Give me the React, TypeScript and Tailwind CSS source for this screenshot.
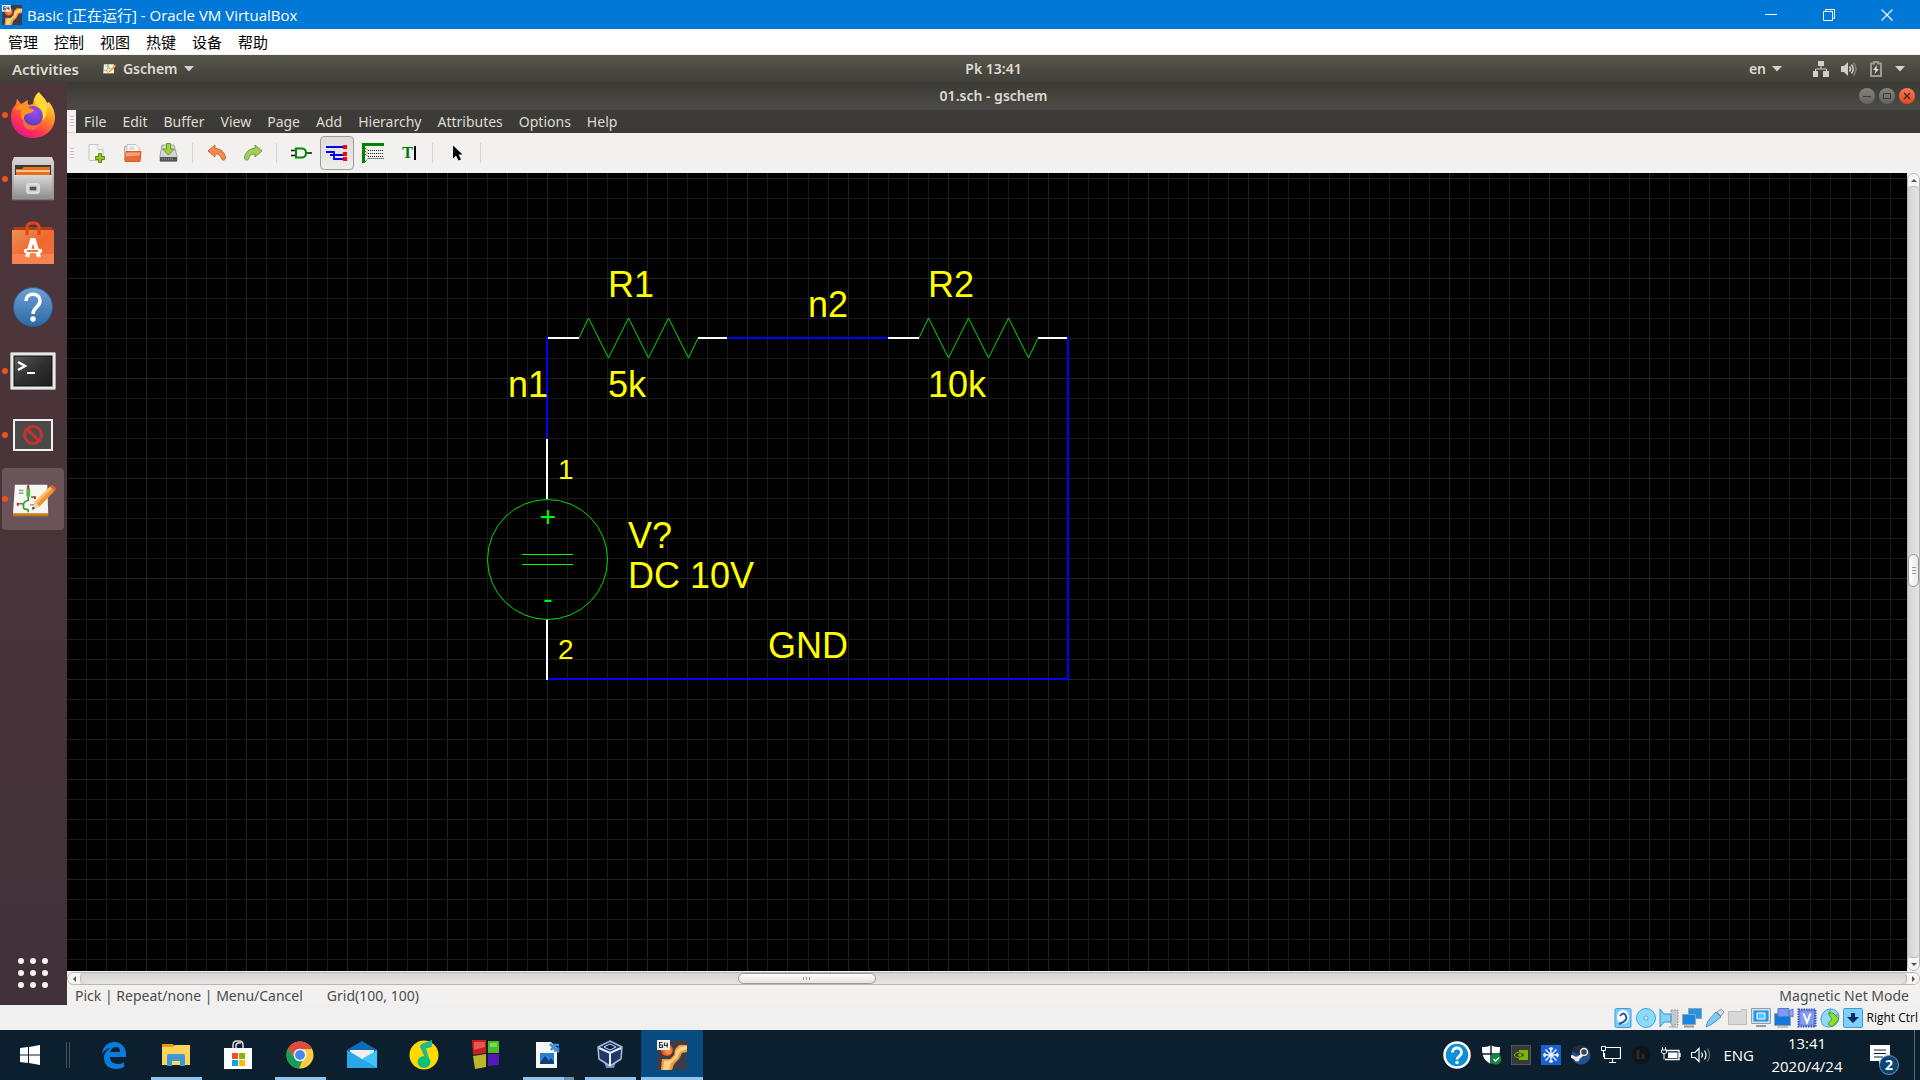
import React from "react";
import type { ReactNode } from "react";

const UBUNTU = "font-['Noto_Sans',sans-serif]";
const SEGOE = "font-['Open_Sans','Noto_Sans_CJK_SC',sans-serif]";

function Svg({ w, h = w, box, children }: { w: number; h?: number; box?: string; children: ReactNode }) {
  return (
    <svg width={w} height={h} viewBox={box ?? `0 0 ${w} ${h}`} fill="none" className="shrink-0" aria-hidden="true">
      {children}
    </svg>
  );
}

/* ---------- VirtualBox host window ---------- */

function MachineIcon({ size }: { size: number }) {
  return (
    <Svg w={size} box="0 0 30 30">
      <rect width="30" height="30" fill="#3b3d4b" />
      <circle cx="10" cy="10" r="6" fill="#f4581a" />
      <circle cx="11" cy="11" r="3.500" fill="#ff8a3a" />
      <path d="M30 5H22L18 9 17 15 13 19H5L4 30h11l2-6 5-5 3-6 5-1Z" fill="#f39a35" />
      <path d="M30 6 23 7 19 11 18 16 14 20 7 21 6 30h6l2-7 6-5 3-6 7-3Z" fill="#ffd28a" />
      <rect x="0" y="0" width="13" height="10" fill="#f4f4f4" />
      <path d="M5.500 2.500h-3v5h3v-2.500h-3M7.500 2.500v3h3.500M10.200 2.500v5" stroke="#333" strokeWidth="1.200" />
    </Svg>
  );
}

function HostTitleBar() {
  return (
    <header className={`flex h-[29px] shrink-0 items-center bg-[#0078d7] text-white ${SEGOE}`}>
      <div className="flex flex-1 items-center gap-[5px] pl-[2px]">
        <MachineIcon size={20} />
        <h1 className="text-[15px] leading-5">Basic [正在运行] - Oracle VM VirtualBox</h1>
      </div>
      <button aria-label="Minimize" className="flex h-full w-[58px] items-center justify-center">
        <Svg w={12}><path d="M0 5.500h12" stroke="#fff" /></Svg>
      </button>
      <button aria-label="Restore" className="flex h-full w-[58px] items-center justify-center">
        <Svg w={12}><path d="M.5 2.500h9v9h-9zM2.500 2.500v-2h9v9h-2" stroke="#fff" /></Svg>
      </button>
      <button aria-label="Close" className="mr-1 flex h-full w-[58px] items-center justify-center">
        <Svg w={12}><path d="M.5.500l11 11M11.500.500l-11 11" stroke="#fff" strokeWidth="1.200" /></Svg>
      </button>
    </header>
  );
}

function HostMenu() {
  return (
    <nav className={`flex h-[26px] shrink-0 border-b border-[#f0f0f0] bg-white text-[15px] leading-[26px] text-black ${SEGOE}`}>
      {["管理", "控制", "视图", "热键", "设备", "帮助"].map((m) => (
        <button key={m} className="px-2">{m}</button>
      ))}
    </nav>
  );
}

/* ---------- Ubuntu top panel ---------- */

function Caret() {
  return <Svg w={10} h={6}><path d="M0 0h10L5 5.500Z" fill="#d5d3cd" /></Svg>;
}

function GschemGlyph() {
  return (
    <>
      <path d="M5 5h34l1 31H3Z" fill="#f6f6f2" />
      <path d="M3 35h37v3H3Z" fill="#c8791b" />
      <path d="M9 11h5M9 14h5M21 26h7" stroke="#999" strokeWidth="1.500" />
      <path d="M19 5v4M19 17v5M22 18h4M19 21q-5 2-5 5v3q0 2 5 2M9 25h5M19 31v3" stroke="#3d9a30" strokeWidth="1.800" />
      <rect x="17" y="8" width="4" height="10" rx="2" fill="#59b64a" />
      <path d="M18 6h2v3h-2zM7 24h2v3H7zM25 17h2v3h-2z" fill="#d12" />
      <path d="M23 31l3-8L42 7l5 4-16 17Z" fill="#f2932c" />
      <path d="M26 23 42 7l2 2-16 16Z" fill="#ffc068" />
      <path d="m42 7 2-2 5 4-2 2Z" fill="#e9572e" />
      <path d="m23 31 3-8 5 5Z" fill="#f0d8a8" />
      <path d="m23 31 1-3 2 2Z" fill="#222" />
    </>
  );
}

function TopPanel() {
  return (
    <div className={`grid h-[27px] shrink-0 grid-cols-[1fr_auto_1fr] items-center bg-linear-to-b from-[#58554b] to-[#403f39] text-[14px] leading-5 font-semibold text-[#dfdbd2] ${UBUNTU}`}>
      <div className="flex items-center pl-3">
        <button className="text-[15px]">Activities</button>
        <button className="ml-6 flex items-center gap-[6px]">
          <Svg w={14} box="2 1 48 40"><GschemGlyph /></Svg>
          Gschem
          <Caret />
        </button>
      </div>
      <button className="ml-[67px]">Pk 13:41</button>
      <div className="flex items-center justify-end pr-[15px]">
        <button className="mr-[31px] flex items-center gap-[6px]">en <Caret /></button>
        <button aria-label="System menu" className="flex items-center gap-3">
          <Svg w={16}>
            <path d="M5 0h6v5H5zM0 10h5v6H0zM10 10h6v6h-6z" fill="#d0cec9" />
            <path d="M8 5v3M2.500 10V8h11v2" stroke="#d0cec9" />
          </Svg>
          <Svg w={16}>
            <path d="M0 5h3l4-4v14l-4-4H0Z" fill="#d0cec9" />
            <path d="M8.500 5.500q2 2.500 0 5M10.500 3.500q3.500 4.500 0 9" stroke="#d0cec9" strokeWidth="1.600" />
            <path d="M12.500 1.500q5 6.500 0 13" stroke="#807e78" strokeWidth="1.600" />
          </Svg>
          <Svg w={14} h={16}>
            <path d="M3 2.500h2V1h4v1.500h3v12.500H2v-12.500Z" stroke="#9c9a95" strokeWidth="2" />
            <path d="M8 4 4 9h2.500L5.500 13 10 8H7.500Z" fill="#dddbd6" />
          </Svg>
          <Caret />
        </button>
      </div>
    </div>
  );
}

/* ---------- Dock ---------- */

function Firefox() {
  return (
    <Svg w={46} box="0 0 46 46">
      <defs>
        <linearGradient id="fx" x1="38" y1="4" x2="12" y2="44" gradientUnits="userSpaceOnUse">
          <stop offset="0" stopColor="#fff14a" /><stop offset=".35" stopColor="#ff9a1f" />
          <stop offset=".7" stopColor="#ff3f47" /><stop offset="1" stopColor="#e31587" />
        </linearGradient>
        <radialGradient id="fxg" cx=".6" cy=".3" r=".8">
          <stop offset="0" stopColor="#a04bf0" /><stop offset="1" stopColor="#4b3fb5" />
        </radialGradient>
      </defs>
      <path d="M29 0c2 3 7 7 8 11l2-1c4 5 6 10 6 15 0 12-9 21-22 21S1 37 1 25C1 19 3 15 6 12l1-5 4 5 7-4c-1 3 0 4 1 5l4-1c1-6 2-9 6-12Z" fill="url(#fx)" />
      <circle cx="23" cy="24" r="10" fill="url(#fxg)" />
      <path d="M5 17c3-5 8-5 12-3 2 2 6 3 7 4-1 3-5 3-7 4-3 1-4 4-2 7-5-2-5-8-3-11Z" fill="#ff9422" />
      <path d="M14 27c2 6 10 9 17 4-2 6-8 8-13 6-4-2-6-6-4-10Z" fill="#ff6a3a" />
      <path d="M29 1c-5 5-5 11-1 14 5 3 6 9 4 14 5-4 6-11 4-17Z" fill="#ffd937" />
    </Svg>
  );
}

function Files() {
  return (
    <Svg w={42} h={44}>
      <defs>
        <linearGradient id="fl" x1="0" y1="0" x2="0" y2="1">
          <stop offset="0" stopColor="#d9d9d9" /><stop offset="1" stopColor="#8f8f8f" />
        </linearGradient>
      </defs>
      <path d="M2 0h38l2 5v38H0V5Z" fill="url(#fl)" />
      <rect x="3" y="8" width="36" height="12" fill="#3a3a3a" />
      <path d="M4 12h6l2-2h26v8H4Z" fill="#e8701c" />
      <path d="M4 14h34" stroke="#ffe0b0" strokeWidth="1.500" />
      <path d="M2 18h38v23H2Z" fill="url(#fl)" />
      <path d="M0 43h42" stroke="#5e5e5e" />
      <rect x="15" y="27" width="12" height="9" rx="2" fill="#a9a9a9" stroke="#ddd" strokeWidth="2" />
      <rect x="17" y="29" width="8" height="5" fill="#555" stroke="#fff" />
    </Svg>
  );
}

function Software() {
  return (
    <Svg w={42} h={44}>
      <defs>
        <linearGradient id="sw" x1="0" y1="0" x2="1" y2="1">
          <stop offset="0" stopColor="#e8935a" /><stop offset=".5" stopColor="#f0692d" /><stop offset="1" stopColor="#ee7440" />
        </linearGradient>
      </defs>
      <path d="M2 6h38l2 6H0Z" fill="#b23c12" />
      <path d="M0 9h42v34H0Z" fill="url(#sw)" />
      <path d="M0 33h42v10H0Z" fill="#f8834f" />
      <path d="M15 14V6q0-4 6-4t6 4v8" stroke="#d8481a" strokeWidth="3" />
      <path d="M15 36 20 19h2l5 17" stroke="#fff" strokeWidth="4" />
      <path d="M14 30h14" stroke="#fff" strokeWidth="4.500" strokeLinecap="round" />
      <path d="M15 30h11" stroke="#ee6a2e" strokeWidth="1.800" />
    </Svg>
  );
}

function HelpDock() {
  return (
    <Svg w={42}>
      <defs>
        <linearGradient id="hp" x1="0" y1="0" x2="0" y2="1">
          <stop offset="0" stopColor="#6fa0d6" /><stop offset="1" stopColor="#2a6aa5" />
        </linearGradient>
      </defs>
      <circle cx="21" cy="21" r="19.500" fill="url(#hp)" stroke="#2c5f94" />
      <path d="M14 15c0-9 14-9 14 0 0 6-7 6-7 13" stroke="#fff" strokeWidth="3.500" />
      <circle cx="21" cy="33" r="2.700" fill="#fff" />
    </Svg>
  );
}

function Terminal() {
  return (
    <Svg w={46} h={38}>
      <defs>
        <linearGradient id="tm" x1="0" y1="0" x2="1" y2="1">
          <stop offset="0" stopColor="#5a5a5a" /><stop offset=".5" stopColor="#303030" /><stop offset="1" stopColor="#1d1d1d" />
        </linearGradient>
      </defs>
      <rect x=".5" y=".5" width="45" height="37" rx="1" fill="#e8e8e8" stroke="#aaa" />
      <rect x="4" y="4" width="38" height="30" fill="url(#tm)" stroke="#111" />
      <path d="m8 10 7 4-7 4" stroke="#fff" strokeWidth="2.500" />
      <path d="M17 21h8" stroke="#fff" strokeWidth="2" />
    </Svg>
  );
}

function Blocked() {
  return (
    <Svg w={40} h={32}>
      <rect width="40" height="32" fill="#f2f2f2" />
      <rect x="2" y="2" width="36" height="28" fill="#4a4a4a" />
      <circle cx="20" cy="16" r="8.500" stroke="#cc2f30" strokeWidth="3" />
      <path d="m14.500 10.500 11 11" stroke="#cc2f30" strokeWidth="3" />
    </Svg>
  );
}

const dock: { name: string; icon: ReactNode; running: boolean; active?: boolean }[] = [
  { name: "Firefox", icon: <Firefox />, running: true },
  { name: "Files", icon: <Files />, running: true },
  { name: "Ubuntu Software", icon: <Software />, running: false },
  { name: "Help", icon: <HelpDock />, running: false },
  { name: "Terminal", icon: <Terminal />, running: true },
  { name: "Blocked application", icon: <Blocked />, running: true },
  { name: "gschem", icon: <Svg w={46} h={40} box="0 -1 48 42"><GschemGlyph /></Svg>, running: true, active: true },
];

function Dock() {
  return (
    <aside className="flex w-[67px] shrink-0 flex-col bg-linear-to-b from-[#4f363b] to-[#413138]">
      {dock.map((d) => (
        <div key={d.name} className="flex h-16 items-center justify-center pt-px pr-px">
          <button
            aria-label={d.name}
            className={d.active ? "relative flex size-[62px] items-center justify-center rounded bg-[#6a545a]" : "relative flex size-[62px] items-center justify-center"}
          >
            {d.running && <span className="absolute left-0 size-[6px] rounded-full bg-[#e95420]" />}
            {d.icon}
          </button>
        </div>
      ))}
      <button aria-label="Show Applications" className="mt-auto flex h-16 items-center justify-center pr-[2px]">
        <Svg w={32}>
          {[4, 16, 28].map((y) => [4, 16, 28].map((x) => <circle key={`${x}-${y}`} cx={x} cy={y} r="3" fill="#f5f3f2" />))}
        </Svg>
      </button>
    </aside>
  );
}

/* ---------- gschem window ---------- */

function WindowTitle() {
  return (
    <div className={`grid h-7 shrink-0 grid-cols-[1fr_auto_1fr] items-center bg-linear-to-b from-[#3b3a35] to-[#4d4b45] ${UBUNTU}`}>
      <span />
      <h2 className="text-[14px] leading-5 font-semibold text-[#dfdbd2]">01.sch - gschem</h2>
      <div className="flex justify-end gap-1 pr-[5px]">
        <button aria-label="Minimize window" className="flex size-4 items-center justify-center rounded-full bg-linear-to-b from-[#85837d] to-[#65635d]">
          <Svg w={8}><path d="M0 4.500h8" stroke="#3c3b37" /></Svg>
        </button>
        <button aria-label="Maximize window" className="flex size-4 items-center justify-center rounded-full bg-linear-to-b from-[#85837d] to-[#65635d]">
          <Svg w={8}><path d="M.5 1.500h7v5h-7z" stroke="#3c3b37" /></Svg>
        </button>
        <button aria-label="Close window" className="flex size-4 items-center justify-center rounded-full bg-linear-to-b from-[#f57a55] to-[#df4a1b]">
          <Svg w={8}><path d="m1 1 6 6M7 1 1 7" stroke="#50200f" strokeWidth="1.300" /></Svg>
        </button>
      </div>
    </div>
  );
}

function Grip() {
  return <Svg w={4} h={10}><path d="M0 .5h4M0 3.500h4M0 6.500h4M0 9.500h4" stroke="#c4c2be" /></Svg>;
}

function WindowMenu() {
  return (
    <nav className={`flex h-[23px] shrink-0 bg-[#3c3b37] text-[14px] leading-[22px] text-[#dfdbd2] ${UBUNTU}`}>
      <span className="flex w-[9px] items-center justify-center border-b border-[#d9d7d4] bg-[#f2f1f0]"><Grip /></span>
      {["File", "Edit", "Buffer", "View", "Page", "Add", "Hierarchy", "Attributes", "Options", "Help"].map((m) => (
        <button key={m} className="px-2">{m}</button>
      ))}
    </nav>
  );
}

function Tool({ name, pressed, children }: { name: string; pressed?: boolean; children: ReactNode }) {
  return (
    <span className="flex w-9 items-center justify-center">
      <button
        aria-label={name}
        aria-pressed={pressed}
        className={pressed
          ? "flex size-[34px] items-center justify-center rounded border border-[#a09d99] bg-linear-to-b from-[#dddcda] to-[#eeedec]"
          : "flex size-[34px] items-center justify-center"}
      >
        {children}
      </button>
    </span>
  );
}

function Sep() {
  return <span className="mr-[6px] ml-[5px] h-5 w-px bg-[#d6d4d1]" />;
}

function Toolbar() {
  return (
    <div role="toolbar" aria-label="Main" className="flex h-10 shrink-0 items-center bg-[#f2f1f0]">
      <span className="flex w-3 justify-center pr-[2px]"><Grip /></span>
      <Tool name="New">
        <Svg w={20}>
          <path d="M2 1.500h9l5 5v11H2z" fill="#f3f3f3" stroke="#c5c5c5" />
          <path d="M11 1.500v5h5" fill="#fff" stroke="#c5c5c5" />
          <path d="M11.500 10.500h3v3h3v3h-3v3h-3v-3h-3v-3h3Z" fill="#8fc31e" stroke="#5c8f10" />
        </Svg>
      </Tool>
      <Tool name="Open">
        <Svg w={20}>
          <path d="M1.500 17V3.500h4l1 2" fill="#ddd" stroke="#b4afa8" />
          <path d="M4 1.500h9l3 3V9H4z" fill="#fff" stroke="#c0c0c0" />
          <path d="M6 4h5M6 6h6" stroke="#bbb" />
          <path d="M3 8.500h15l-1 10H2Z" fill="#ec6a36" stroke="#d8592a" />
          <path d="M3.500 9.500h13.500l-.5 3-14 1Z" fill="#f6a27c" />
        </Svg>
      </Tool>
      <Tool name="Save">
        <Svg w={20}>
          <path d="M3 2h12l3 11v5H1v-5Z" fill="#d6d6d6" stroke="#a5a5a5" />
          <path d="M1 14h17v4.500H1z" fill="#555" />
          <path d="M3 16h12" stroke="#aaa" strokeDasharray="1 1" />
          <path d="M7.500.500h4V6h4l-6 6-6-6h4Z" fill="#a2cf3d" stroke="#6f9f20" />
        </Svg>
      </Tool>
      <Sep />
      <Tool name="Undo">
        <Svg w={20}>
          <path d="m1 8 7-6v3.500c6 0 10 4 10.500 9.500 0 2-3 3-4 1-1-4-3-5-6.500-5V14Z" fill="#f08a50" stroke="#d8622b" />
        </Svg>
      </Tool>
      <Tool name="Redo">
        <Svg w={20}>
          <path d="m19 8-7-6v3.500C6 5.500 2 9.500 1.500 15c0 2 3 3 4 1 1-4 3-5 6.500-5V14Z" fill="#a6cd5a" stroke="#6c9e2a" />
        </Svg>
      </Tool>
      <Sep />
      <Tool name="Add component">
        <Svg w={22} h={20}>
          <path d="M1 7.500h5M1 12.500h5M16 10h6" stroke="#111" strokeWidth="1.500" />
          <path d="M6 5.500h6q4 .5 4 4.500t-4 4.500H6Z" fill="#f8f8f8" stroke="#008a00" strokeWidth="2" />
        </Svg>
      </Tool>
      <Tool name="Add net" pressed>
        <Svg w={22} h={20}>
          <path d="M0 4h18M0 9h8v3h10M4 12h4v4h10" stroke="#0000f0" strokeWidth="1.800" />
          <path d="M17 2h4v4h-4zM17 9h4v4h-4zM17 14h4v4h-4z" fill="#f00" />
        </Svg>
      </Tool>
      <Tool name="Add bus">
        <Svg w={22} h={20}>
          <path d="M1.500 20V1.500H22" stroke="#008400" strokeWidth="3" />
          <path d="M3 5l3 2.500h16M3 8l3 2.500h16M3 11l3 2.500h16" stroke="#111" strokeDasharray="1 1" />
          <path d="M3 19l3-3.500h16" stroke="#111" strokeDasharray="1 1" />
        </Svg>
      </Tool>
      <Tool name="Add text">
        <span aria-hidden="true" className="border-r-2 border-black pr-px font-['Liberation_Serif',serif] text-[16px] leading-[14px] font-bold text-[#007a00]">T</span>
      </Tool>
      <Sep />
      <Tool name="Select">
        <Svg w={20}>
          <path d="M6 2.500v13l3-3 2.500 5 2.500-1-2.500-5h4Z" fill="#000" />
        </Svg>
      </Tool>
      <Sep />
    </div>
  );
}

const PITCH = 20.04;
const columns = Array.from({ length: 160 }, (_, i) => i - 24);
const rows = Array.from({ length: 90 }, (_, i) => i - 9);

function Resistor() {
  return (
    <>
      <path d="M0 0h31M150 0h29" stroke="#fff" strokeWidth="2" />
      <path d="m31 0 9.500-20 20 40 20-40 20 40 20-40 20 40L150 0" stroke="#00dc00" />
    </>
  );
}

const labels = [
  { x: 61, y: -41, t: "R1" },
  { x: 61, y: 59, t: "5k" },
  { x: -39, y: 59, t: "n1" },
  { x: 261, y: -21, t: "n2" },
  { x: 381, y: -41, t: "R2" },
  { x: 381, y: 59, t: "10k" },
  { x: 81, y: 210, t: "V?" },
  { x: 81, y: 250, t: "DC 10V" },
  { x: 221, y: 320, t: "GND" },
];

/* Schematic sheet; the origin of the inner group is the upper left corner of the circuit. */
function Sheet() {
  return (
    <div className="relative min-w-0 flex-1 overflow-hidden bg-black">
      <svg className="absolute inset-0 size-full" fill="none" role="img" aria-label="Circuit with a voltage source and two resistors">
        <g transform="translate(480 165)">
          {columns.map((i) => (
            <path key={`c${i}`} d={`M${Math.round(i * PITCH) + 0.5} -170V1700`} stroke={i % 5 === 0 ? "#222222" : "#1a1a1a"} />
          ))}
          {rows.map((i) => (
            <path key={`r${i}`} d={`M-490 ${Math.round(i * PITCH) + 0.5}H2800`} stroke={(i - 2) % 5 === 0 ? "#222222" : "#1a1a1a"} />
          ))}
          <path d="M0 -1v102M179 0h162M521-1v343M0 341h521" stroke="#0000ff" strokeWidth="2" />
          <g transform="translate(1 0)"><Resistor /></g>
          <g transform="translate(341 0)"><Resistor /></g>
          <path d="M0 101v60M0 281v61" stroke="#fff" strokeWidth="2" />
          <circle cx="0.500" cy="221.500" r="60" stroke="#00dc00" />
          <path d="M-25 216.500h51M-25 226.500h51" stroke="#00ff00" />
          <g className="font-['Liberation_Sans',sans-serif] text-[36px]" fill="#ffff00">
            {labels.map((l) => <text key={l.t} x={l.x} y={l.y}>{l.t}</text>)}
          </g>
          <g className="font-['Liberation_Sans',sans-serif] text-[28px]">
            <text x="11" y="141" fill="#ffff00">1</text>
            <text x="11" y="321" fill="#ffff00">2</text>
            <text x="1" y="188" fill="#00ff00" textAnchor="middle">+</text>
            <text x="1" y="270" fill="#00ff00" textAnchor="middle">-</text>
          </g>
        </g>
      </svg>
    </div>
  );
}

function VScroll() {
  return (
    <div className="flex w-[13px] shrink-0 flex-col rounded-full border border-[#b9b7b3] bg-[#e0dfdd]">
      <button aria-label="Scroll up" className="flex h-3 items-center justify-center rounded-t-full bg-[#f6f5f4]">
        <Svg w={6} h={3}><path d="M0 3h6L3 0Z" fill="#555" /></Svg>
      </button>
      <div className="flex flex-1 flex-col justify-center rounded-full border-y border-[#b9b7b3] bg-linear-to-r from-[#d6d4d1] to-[#e6e5e3] pb-[3px]">
        <div className="flex h-[33px] items-center justify-center rounded-full border border-[#9a9894] bg-linear-to-r from-white to-[#e9e8e6]">
          <Svg w={4} h={8}><path d="M0 .5h4M0 3.500h4M0 6.500h4" stroke="#999" /></Svg>
        </div>
      </div>
      <button aria-label="Scroll down" className="flex h-3 items-center justify-center rounded-b-full bg-[#f6f5f4]">
        <Svg w={6} h={3}><path d="M0 0h6L3 3Z" fill="#555" /></Svg>
      </button>
    </div>
  );
}

function HScroll() {
  return (
    <div className="shrink-0 bg-[#f2f1f0] pt-px">
      <div className="flex h-[13px] rounded-full border border-[#b9b7b3] bg-[#e0dfdd]">
        <button aria-label="Scroll left" className="flex w-3 items-center justify-center rounded-l-full bg-[#f6f5f4]">
          <Svg w={3} h={6}><path d="M3 0v6L0 3Z" fill="#555" /></Svg>
        </button>
        <div className="flex flex-1 rounded-full border-x border-[#b9b7b3] bg-linear-to-b from-[#d6d4d1] to-[#e6e5e3]">
          <div className="ml-[36%] flex w-[138px] items-center justify-center rounded-full border border-[#9a9894] bg-linear-to-b from-white to-[#e4e3e1]">
            <Svg w={8} h={3}><path d="M.5 0v3M3.500 0v3M6.500 0v3" stroke="#999" /></Svg>
          </div>
        </div>
        <button aria-label="Scroll right" className="flex w-3 items-center justify-center rounded-r-full bg-[#f6f5f4]">
          <Svg w={3} h={6}><path d="M0 0v6l3-3Z" fill="#555" /></Svg>
        </button>
      </div>
    </div>
  );
}

function SchematicStatus() {
  return (
    <div className={`flex h-5 shrink-0 bg-[#f2f1f0] pr-[11px] pl-2 text-[14px] leading-[22px] text-[#4c4c4c] ${UBUNTU}`}>
      <span>Pick | Repeat/none | Menu/Cancel</span>
      <span className="ml-6">Grid(100, 100)</span>
      <span className="ml-auto">Magnetic Net Mode</span>
    </div>
  );
}

/* ---------- VirtualBox status bar ---------- */

const hostIcons: { name: string; art: ReactNode }[] = [
  { name: "Hard disks", art: <><rect x="2" y=".5" width="16" height="19" rx="1.500" fill="#7ecdf8" stroke="#3f9ad8" /><ellipse cx="10" cy="9" rx="6" ry="7" fill="#fff" /><path d="M7 8q4-5 6 0t-7 8" stroke="#1d56a8" strokeWidth="2" /></> },
  { name: "Optical drives", art: <><circle cx="10" cy="10" r="9.500" fill="#8bdcfb" stroke="#3f9fe0" /><circle cx="10" cy="10" r="2" fill="#fff" stroke="#3f9fe0" /></> },
  { name: "Audio", art: <><path d="M12 2h7v15h-7z" fill="#c4c8cc" stroke="#999" strokeDasharray="2 1" /><path d="M14 17v2M10 19h9" stroke="#999" /><path d="M1 1l4 5h7v8H5l-4 5Z" fill="#7fd4fa" stroke="#3a8fce" /></> },
  { name: "Network", art: <><path d="M6.500.500h13v10h-13z" fill="#2196e8" stroke="#9aa0a6" /><path d="M.5 6.500h13v10H.5z" fill="#1688e6" stroke="#9aa0a6" /><path d="M2 18.500h10" stroke="#999" strokeWidth="2" /></> },
  { name: "USB", art: <><path d="m12 4 4-3 3 3-3 4Z" fill="#ddd" stroke="#999" /><path d="m3 13 8-9 5 5-9 7-6 3Z" fill="#7ecbf5" stroke="#4a96ca" /></> },
  { name: "Shared folders", art: <path d="M.5 16.500v-13h12l1-2h5v15Z" fill="#d8d8d8" stroke="#bdbdbd" /> },
  { name: "Display", art: <><path d="M.5.500h19v15H.5z" fill="#d9dde0" stroke="#9a9ea2" /><path d="M2.500 2.500h15v11h-15z" fill="#1a9bf0" /><path d="M6 5h8v6H6z" fill="#5cc0fa" stroke="#fff" /><path d="M5 18h10" stroke="#999" strokeWidth="2" /></> },
  { name: "Recording", art: <><path d="M.5 5.500h16v12H.5z" fill="#0f7bdc" stroke="#9aa0a6" /><path d="M4 .5h11v8H4z" fill="#7f9cf0" stroke="#5a78d8" /><path d="m15 3 4-2v8l-4-2Z" fill="#8faaf5" stroke="#5a78d8" /><path d="M3 19h11" stroke="#999" /></> },
  { name: "Processor", art: <><rect x="1.500" y="1.500" width="17" height="17" fill="#6c8bea" stroke="#3d56b5" strokeWidth="2" strokeDasharray="1.500 1" /><rect x="3.500" y="3.500" width="13" height="13" rx="2" fill="#829cf2" /><path d="m6.500 5.500 3.500 9 3.500-9" stroke="#fff" strokeWidth="2" /></> },
  { name: "Mouse integration", art: <><path d="M1 11Q2 2 10 1q8 0 9 7 0 10-10 11-8 0-8-8Z" fill="#8fd9fa" stroke="#4a9fd0" /><path d="M10 1v7l8-1" stroke="#4a9fd0" /><path d="m8 5 5 0 6 6-7 8-4-3 4-5Z" fill="#8fe02a" stroke="#4aa010" /></> },
  { name: "Keyboard", art: <><rect x=".5" y=".5" width="19" height="19" rx="1" fill="#7cd0fa" stroke="#3f9ad8" /><path d="M8 5h4v4h4l-6 6-6-6h4Z" fill="#052a66" /></> },
];

function HostStatus() {
  return (
    <div className="flex h-[25px] shrink-0 items-center justify-end bg-[#f0f0f0] pr-[2px]">
      <div className="flex gap-[3px]">
        {hostIcons.map((i) => (
          <button key={i.name} aria-label={i.name}><Svg w={20}>{i.art}</Svg></button>
        ))}
      </div>
      <span className={`ml-1 text-[12px] leading-5 text-black ${SEGOE}`}>Right Ctrl</span>
    </div>
  );
}

/* ---------- Windows taskbar ---------- */

const apps: { name: string; state?: "open" | "group" | "active"; icon: ReactNode }[] = [
  { name: "Microsoft Edge", icon: <Svg w={26} h={28}><path d="M1 13C2 5 7 1 13 1c8 0 12 6 12 12v3H9c0 5 4 7 8 7 3 0 5-1 6-2v5c-2 1-5 2-8 2C8 28 3 24 3 17c0-5 3-8 7-10-4 0-7 3-9 6Zm8-2h10c0-3-1-5-4-5s-5 2-6 5Z" fill="#0a7cdc" /></Svg> },
  { name: "File Explorer", state: "open", icon: <Svg w={28} h={26}><path d="M0 2h11l2 3H0Z" fill="#e09d0a" /><path d="M0 5h10l3-2h15v20H0Z" fill="#ffd45e" /><path d="M5 24V14q0-2 2-2h14q2 0 2 2v10h-5v-5h-8v5Z" fill="#3f96d8" /></Svg> },
  { name: "Microsoft Store", icon: <Svg w={30}><path d="M10 9V5q0-4 4-4h2q4 0 4 4v4M13 9V5q1-3 5-2" stroke="#ddd" strokeWidth="1.500" /><path d="M1 8h28v21H1z" fill="#fff" /><path d="M9 13h6v6H9z" fill="#f25022" /><path d="M16 13h6v6h-6z" fill="#7fba00" /><path d="M9 20h6v6H9z" fill="#00a4ef" /><path d="M16 20h6v6h-6z" fill="#ffb900" /></Svg> },
  { name: "Google Chrome", state: "open", icon: <Svg w={28}><circle cx="14" cy="14" r="13.500" fill="#ffcd40" /><path d="M2 7.500A13.500 13.500 0 0 1 26 8H14a6 6 0 0 0-5.500 9Z" fill="#dd4b3e" /><path d="M2 7.500 8.500 17a6 6 0 0 0 8 2.500L13 27.500A13.500 13.500 0 0 1 2 7.500Z" fill="#159c58" /><circle cx="14" cy="14" r="6.300" fill="#fff" /><circle cx="14" cy="14" r="5" fill="#4688f1" /></Svg> },
  { name: "Mail", icon: <Svg w={30}><path d="M0 10 15 1l15 9v18H0Z" fill="#0f6cbd" /><path d="M3 10h24v8L15 20 3 17Z" fill="#f0f0f0" /><path d="M0 10v18h30L0 10Z" fill="#28a8ea" /><path d="M30 10v18L15 19Z" fill="#3cc5f5" /></Svg> },
  { name: "QQ Music", icon: <Svg w={30}><circle cx="15" cy="15" r="14.500" fill="#fedb00" /><path d="M23 0v6q-1 2-6 2l4 14h-3L11 7q0-3 4-4Z" fill="#22b98c" /><ellipse cx="15" cy="22" rx="6.500" ry="6" fill="#0cc07c" /></Svg> },
  { name: "Color blocks", icon: <Svg w={28} h={30}><path d="M0 0h14v13L1 15Z" fill="#c91f1f" /><path d="M16 1h11v12H16Z" fill="#48bd28" /><path d="m1 16 13-2v13L3 29Z" fill="#bab82a" /><path d="M16 14h11v11l-11 1Z" fill="#5219b5" /><path d="M2 2h11v5L2 10Z" fill="#e25a52" /><path d="M18 3h7v4h-7Z" fill="#7ddc5c" /></Svg> },
  { name: "Image viewer", state: "group", icon: <Svg w={28} h={28}><path d="M2 1h15l6 6v20H2z" fill="#f6f7f9" /><path d="M6 12h14v11H6z" fill="#2b7ed0" /><path d="m6 22 5-7 4 5 2-3 3 4v2H6Z" fill="#103f73" /><path d="m16 3 9 8M17 9l5-6M20 4h5M20 10l5-3" stroke="#3b8ede" strokeWidth="2.500" /></Svg> },
  { name: "VirtualBox", state: "open", icon: <Svg w={28} h={30}><path d="m8 22 2 6h8l2-6Z" fill="#7587b5" /><path d="m14 1 12 6-1 12-11 7L3 19 2 7Z" fill="#203866" stroke="#a8bbda" strokeWidth="1.500" /><path d="m3 8 11 5 11-5M14 13v13" stroke="#e5ecf8" strokeWidth="2" /><path d="m8 7 6-3 6 3-6 3Z" fill="#0c1c3c" stroke="#c9d6ec" /></Svg> },
  { name: "Basic - VirtualBox", state: "active", icon: <MachineIcon size={30} /> },
];

const tray: { name: string; art: ReactNode }[] = [
  { name: "Security", art: <><path d="M10 0c3 2 6 2 9 2 0 8-1 13-9 17C2 15 1 10 1 2c3 0 6 0 9-2Z" fill="#fff" /><path d="M10 0v19M1 9h18" stroke="#0b1f2e" strokeWidth="1.500" /><circle cx="15" cy="14" r="5.500" fill="#10893e" /><path d="m12.500 14 2 2 3.500-3.500" stroke="#fff" strokeWidth="1.300" /></> },
  { name: "NVIDIA", art: <><rect x=".5" y=".5" width="19" height="19" fill="#3a3a3a" stroke="#555" /><path d="M8 5h9v10H8Z" fill="#76b900" /><path d="M3 10q5-6 11 0-6 6-11 0Z" fill="#3a3a3a" stroke="#76b900" /><circle cx="9" cy="10" r="1.800" fill="#76b900" /></> },
  { name: "Snowflake", art: <><rect width="20" height="20" fill="#1d60d0" /><path d="M10 2v16M2 10h16M4.500 4.500l11 11M15.500 4.500l-11 11M8 3l2 2 2-2M8 17l2-2 2 2M3 8l2 2-2 2M17 8l-2 2 2 2" stroke="#e8f4ff" strokeWidth="1.400" /></> },
  { name: "Steam", art: <><circle cx="10" cy="10" r="9.500" fill="#20558c" /><path d="M1 6A9.500 9.500 0 0 1 19 7l-6 6Z" fill="#222d42" /><circle cx="13" cy="7" r="3.500" fill="#31445f" stroke="#eee" strokeWidth="1.500" /><path d="m0 11 6 3 5-4" stroke="#eee" strokeWidth="3" /><circle cx="6" cy="14" r="2.500" fill="#e9e9e9" /></> },
  { name: "Ethernet", art: <><path d="M5 2.500h14.500v11h-16V8M11.500 14v3M8 17.500h7" stroke="#fff" strokeWidth="1.200" /><path d="M.5 1.500h4v4h-4zM2.500 5.500V12" stroke="#fff" /></> },
  { name: "Background app", art: <><circle cx="10" cy="10" r="9.500" fill="#111416" /><path d="M7 5v9M12 9v5" stroke="#292b2d" strokeWidth="3" /></> },
  { name: "Battery", art: <><path d="M5 5.500h13v9H4M19 8v4" stroke="#fff" strokeWidth="1.300" /><path d="M7 7.500h9.500v5.500H7z" fill="#fff" /><path d="M1.500 2v3M4.500 2v3M.5 5h5v2.500l-2.500 1.500L.5 7.500ZM3 9v5.500" stroke="#fff" /></> },
  { name: "Volume", art: <><path d="M.5 7.500H4l4-4v13l-4-4H.5z" stroke="#fff" strokeWidth="1.200" /><path d="M10.500 7.500q2 2.500 0 5M13.500 5.500q3 4.500 0 9" stroke="#fff" strokeWidth="1.200" /><path d="M16.500 3.500q4 6.500 0 13" stroke="#6c7880" strokeWidth="1.200" /></> },
];

const appClass = {
  idle: "relative flex h-full w-[62px] items-center justify-center",
  active: "relative flex h-full w-[62px] items-center justify-center bg-[#074b80]",
};

function Taskbar() {
  return (
    <footer className={`flex h-[50px] shrink-0 items-center bg-[#0b1f2e] text-[15px] text-white ${SEGOE}`}>
      <button aria-label="Start" className="flex h-full w-[60px] items-center justify-center">
        <Svg w={20}><path d="M0 3l8-1v7.500H0zM9 2l11-2v9.500H9zM0 10.500h8V18l-8-1zM9 10.500h11V20L9 18z" fill="#fff" /></Svg>
      </button>
      <span className="mr-[13px] ml-[6px] h-[26px] w-1 border-x border-[#43525d]" />
      {apps.map((a) => (
        <button key={a.name} aria-label={a.name} className={a.state === "active" ? appClass.active : appClass.idle}>
          {a.icon}
          {a.state === "open" && <span className="absolute bottom-0 h-[3px] w-[51px] bg-[#90c3ee]" />}
          {a.state === "group" && <span className="absolute bottom-0 h-[3px] w-[51px] border-r-[10px] border-[#6d91ae] bg-[#90c3ee]" />}
          {a.state === "active" && <span className="absolute inset-x-0 bottom-0 h-[3px] bg-[#90c3ee]" />}
        </button>
      ))}
      <div className="ml-auto flex h-full items-center">
        <button aria-label="Help" className="mr-[10px]">
          <Svg w={28}>
            <circle cx="14" cy="14" r="12.500" fill="#0d8fd8" stroke="#fff" strokeWidth="2.500" />
            <path d="M9.500 11.500c0-6 9-6 9 0 0 4-4.500 3.500-4.500 7" stroke="#fff" strokeWidth="2.800" />
            <circle cx="14" cy="21.500" r="1.800" fill="#fff" />
          </Svg>
        </button>
        <div className="flex gap-[10px]">
          {tray.map((t) => (
            <button key={t.name} aria-label={t.name}><Svg w={20}>{t.art}</Svg></button>
          ))}
        </div>
        <button className="ml-3 leading-5">ENG</button>
        <button className="ml-[15px] w-[76px] text-center leading-[23px]">
          13:41
          <br />
          2020/4/24
        </button>
        <button aria-label="Notifications" className="relative mr-[15px] ml-6 flex h-full w-[30px] items-center">
          <Svg w={22} h={24}>
            <path d="M1 2h20v16h-7l-4 4v-4H1Z" fill="#fff" />
            <path d="M5 7h12M5 10.500h12M5 14h9" stroke="#0b1f2e" />
          </Svg>
          <span className="absolute right-0 bottom-[5px] flex size-5 items-center justify-center rounded-full border border-[#6f93b3] bg-[#0b4576] text-[14px] leading-4 font-bold">2</span>
        </button>
        <span className="mr-[5px] h-full w-px bg-[#5c6a74]" />
      </div>
    </footer>
  );
}

export default function App() {
  return (
    <div className="flex h-screen flex-col overflow-hidden whitespace-nowrap">
      <HostTitleBar />
      <HostMenu />
      <TopPanel />
      <div className="flex min-h-0 flex-1">
        <Dock />
        <main className="flex min-w-0 flex-1 flex-col">
          <WindowTitle />
          <WindowMenu />
          <Toolbar />
          <div className="flex min-h-0 flex-1 bg-[#f2f1f0]">
            <Sheet />
            <VScroll />
          </div>
          <HScroll />
          <SchematicStatus />
        </main>
      </div>
      <HostStatus />
      <Taskbar />
    </div>
  );
}
